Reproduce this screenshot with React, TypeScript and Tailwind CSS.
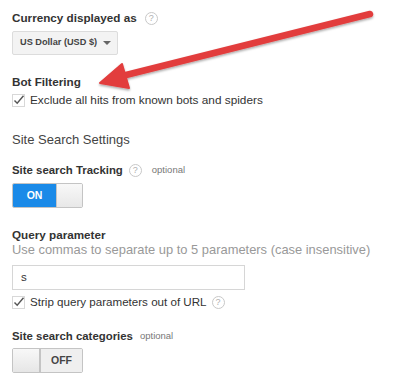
import React from "react";

function Help() {
  return (
    <span className="inline-flex h-[13px] w-[13px] items-center justify-center rounded-full border border-[#c8c8c8] text-[9px] leading-none text-[#b0b0b0]">
      ?
    </span>
  );
}

function Check() {
  return (
    <svg width="13" height="13" viewBox="0 0 13 13" className="shrink-0">
      <rect x="0.5" y="0.5" width="12" height="12" fill="#fff" stroke="#d8d8d8" />
      <path d="M2.5 6.5 L5.2 9.3 L11.5 1.8" fill="none" stroke="#555" strokeWidth="1.4" />
    </svg>
  );
}

export default function App() {
  return (
    <div className="relative h-[387px] w-[400px] overflow-hidden bg-white font-['Liberation_Sans',Arial,sans-serif] text-[#222]">
      <div className="flex flex-col px-[12px] pt-[10px]">
        <div className="flex items-center gap-[8px] leading-[16px]">
          <span className="text-[11.7px] font-bold text-[#333]">Currency displayed as</span>
          <Help />
        </div>
        <button className="mt-[5px] flex h-[24px] w-[106px] items-center gap-[6px] whitespace-nowrap rounded-[2px] border border-[#dcdcdc] bg-[#f3f3f3] pl-[7px] text-[9.2px] font-bold text-[#444]">
          US Dollar (USD $)
          <span className="h-0 w-0 border-x-[4px] border-t-[4px] border-x-transparent border-t-[#666]" />
        </button>

        <div className="mt-[19px] text-[11.7px] font-bold leading-[16px] text-[#333]">Bot Filtering</div>
        <div className="mt-[2px] flex items-center gap-[5px] text-[11.8px] leading-[16px] text-[#333]">
          <Check />
          Exclude all hits from known bots and spiders
        </div>

        <div className="mt-[22px] text-[13px] leading-[20px] text-[#444]">Site Search Settings</div>

        <div className="mt-[12px] flex items-center gap-[6px] leading-[16px]">
          <span className="text-[11.4px] font-bold text-[#333]">Site search Tracking</span>
          <Help />
          <span className="ml-[4px] text-[9.5px] text-[#777]">optional</span>
        </div>
        <div className="mt-[5px] flex h-[25px] w-[71px] overflow-hidden rounded-[2px] border border-[#c4c4c4]">
          <div className="flex w-[43px] items-center justify-center bg-[#1a8ae8] text-[10.5px] font-bold text-white">ON</div>
          <div className="flex-1 border-l border-[#c4c4c4] bg-gradient-to-b from-[#f8f8f8] to-[#e8e8e8]" />
        </div>

        <div className="mt-[19px] text-[11.7px] font-bold leading-[16px] text-[#333]">Query parameter</div>
        <div className="whitespace-nowrap text-[12.9px] leading-[14px] text-[#999]">
          Use commas to separate up to 5 parameters (case insensitive)
        </div>
        <div className="mt-[8px] flex h-[25px] w-[233px] items-center border border-[#d6d6d6] pl-[8px] text-[11.5px] text-[#333]">
          s
        </div>
        <div className="mt-[4px] flex items-center gap-[5px] text-[11.6px] leading-[16px] text-[#333]">
          <Check />
          Strip query parameters out of URL
          <span className="flex">
            <Help />
          </span>
        </div>

        <div className="mt-[18px] flex items-center gap-[7px] leading-[16px]">
          <span className="text-[11.4px] font-bold text-[#333]">Site search categories</span>
          <span className="text-[9.5px] text-[#777]">optional</span>
        </div>
        <div className="mt-[4px] flex h-[25px] w-[71px] overflow-hidden rounded-[2px] border border-[#c4c4c4]">
          <div className="w-[28px] border-r-2 border-[#c4c4c4] bg-gradient-to-b from-[#f8f8f8] to-[#e6e6e6]" />
          <div className="flex flex-1 items-center justify-center bg-[#efefef] text-[10.5px] font-bold text-[#444]">OFF</div>
        </div>
      </div>

      <svg className="pointer-events-none absolute left-0 top-0" width="400" height="387" viewBox="0 0 400 387">
        <defs>
          <filter id="sh" x="-10%" y="-30%" width="120%" height="160%">
            <feDropShadow dx="0" dy="1.5" stdDeviation="1.2" floodColor="#000" floodOpacity="0.35" />
          </filter>
        </defs>
        <g filter="url(#sh)" fill="#e23d3d" stroke="#e23d3d">
          <line x1="370" y1="14" x2="122" y2="76" strokeWidth="6.5" strokeLinecap="round" />
          <path d="M100 83 L122 64 L129 88 Z" strokeWidth="2" strokeLinejoin="round" />
        </g>
      </svg>
    </div>
  );
}
